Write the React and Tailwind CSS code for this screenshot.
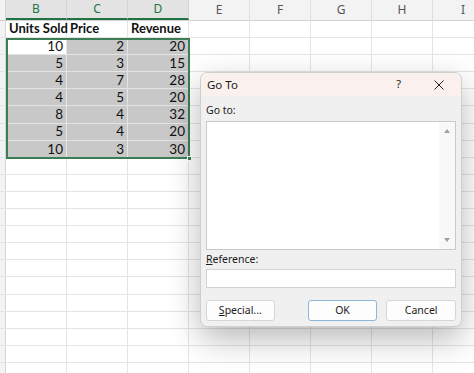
import React from "react";

const columns = ["B", "C", "D", "E", "F", "G", "H", "I"];
const selectedCols = ["B", "C", "D"];

const data = [
  [10, 2, 20],
  [5, 3, 15],
  [4, 7, 28],
  [4, 5, 20],
  [8, 4, 32],
  [5, 4, 20],
  [10, 3, 30],
];

const cellFont = { fontFamily: "Lato, 'Open Sans', sans-serif" };
const uiFont = { fontFamily: "'Noto Sans', 'Open Sans', sans-serif" };

function HeaderRow() {
  return (
    <div className="flex h-[21px] border-b border-[#d4d4d4] bg-[#f3f3f3]">
      <div className="w-[6px] shrink-0 border-r border-[#d4d4d4]" />
      {columns.map((c) => {
        const sel = selectedCols.includes(c);
        return (
          <div
            key={c}
            className={
              sel
                ? "flex w-[61px] shrink-0 items-center justify-center border-r border-[#d4d4d4] border-b-2 border-b-[#217346] bg-[#e3e3e3] text-[12px] text-[#217346]"
                : "flex w-[61px] shrink-0 items-center justify-center border-r border-[#e0e0e0] text-[12px] text-[#555]"
            }
            style={uiFont}
          >
            {c}
          </div>
        );
      })}
    </div>
  );
}

function Cell({ children, align = "right", bold, shaded, white }) {
  let bg = "";
  if (shaded) bg = "bg-[#c8c8c8]";
  if (white) bg = "bg-white";
  return (
    <div
      className={`flex h-full w-[61px] shrink-0 items-center overflow-visible whitespace-nowrap border-r border-[#e4e4e4] px-[3px] text-[13.5px] text-[#111] ${
        align === "right" ? "justify-end" : "justify-start"
      } ${bold ? "font-bold text-[13px]" : ""} ${bg}`}
      style={cellFont}
    >
      {children}
    </div>
  );
}

function Row({ children }) {
  return (
    <div className="flex h-[17.1px] border-b border-[#e4e4e4]">
      <div className="w-[6px] shrink-0 border-r border-[#d4d4d4] bg-[#f3f3f3]" />
      {children}
    </div>
  );
}

function Sheet() {
  const blankRows = Array.from({ length: 13 });
  return (
    <div className="relative">
      <HeaderRow />
      <Row>
        <Cell align="left" bold>Units Sold</Cell>
        <Cell align="left" bold>Price</Cell>
        <Cell align="left" bold>Revenue</Cell>
        {columns.slice(3).map((c) => (
          <Cell key={c} />
        ))}
      </Row>
      {data.map((r, i) => (
        <Row key={i}>
          <Cell shaded={i !== 0} white={i === 0}>{r[0]}</Cell>
          <Cell shaded>{r[1]}</Cell>
          <Cell shaded>{r[2]}</Cell>
          {columns.slice(3).map((c) => (
            <Cell key={c} />
          ))}
        </Row>
      ))}
      {blankRows.map((_, i) => (
        <Row key={"b" + i}>
          {columns.map((c) => (
            <Cell key={c} />
          ))}
        </Row>
      ))}
      {/* selection outline */}
      <div className="pointer-events-none absolute left-[6px] top-[38px] h-[121px] w-[184px] border-2 border-[#3b7d55]">
        <div className="absolute -bottom-[4px] -right-[4px] h-[5px] w-[5px] border border-white bg-[#3b7d55]" />
      </div>
    </div>
  );
}

function GoToDialog() {
  return (
    <div
      className="absolute left-[200px] top-[72px] flex h-[255px] w-[262px] flex-col overflow-hidden rounded-[7px] border border-[#cfcfcf] bg-[#f0f0f0] shadow-[0_12px_32px_rgba(0,0,0,0.28)]"
      style={uiFont}
    >
      <div className="flex h-[23px] shrink-0 items-center bg-[#faf0ee] pl-[6px] text-[11.5px] text-[#1b1b1b]">
        <span>Go To</span>
        <span className="ml-auto mr-[33px] text-[11px]">?</span>
        <svg width="10" height="10" viewBox="0 0 10 10" className="mr-[17px]">
          <path d="M0.5 0.5 L9.5 9.5 M9.5 0.5 L0.5 9.5" stroke="#222" strokeWidth="1" />
        </svg>
      </div>
      <div className="flex flex-1 flex-col px-[5px] pt-[5px] text-[10.5px] text-[#1b1b1b]">
        <div className="flex h-[20px] items-center">Go to:</div>
        <div className="flex h-[129px] border border-[#c9c9c9] bg-white">
          <div className="flex-1" />
          <div className="flex w-[16px] flex-col items-center justify-between bg-[#f8f8f8] py-[7px]">
            <svg width="6" height="4" viewBox="0 0 6 4">
              <path d="M0 4 L3 0 L6 4 Z" fill="#a0a0a0" />
            </svg>
            <svg width="6" height="4" viewBox="0 0 6 4">
              <path d="M0 0 L6 0 L3 4 Z" fill="#a0a0a0" />
            </svg>
          </div>
        </div>
        <div className="flex h-[19px] items-center">
          <span>
            <span className="underline">R</span>eference:
          </span>
        </div>
        <div className="h-[19px] border border-[#d3d3d3] bg-white" />
        <div className="mt-[12px] flex h-[21px] items-stretch">
          <button className="flex w-[69px] items-center justify-center rounded-[3px] border border-[#d6d6d6] bg-[#fdfdfd] text-[10.5px]">
            <span>
              <span className="underline">S</span>pecial...
            </span>
          </button>
          <button className="ml-[33px] flex w-[70px] items-center justify-center rounded-[3px] border border-[#8fb6d8] bg-[#fdfdfd] text-[10.5px]">
            OK
          </button>
          <button className="ml-[9px] flex w-[70px] items-center justify-center rounded-[3px] border border-[#d6d6d6] bg-[#fdfdfd] text-[10.5px]">
            Cancel
          </button>
        </div>
      </div>
    </div>
  );
}

export default function App() {
  return (
    <div className="relative h-[373px] w-[474px] overflow-hidden bg-white">
      <Sheet />
      <GoToDialog />
    </div>
  );
}
